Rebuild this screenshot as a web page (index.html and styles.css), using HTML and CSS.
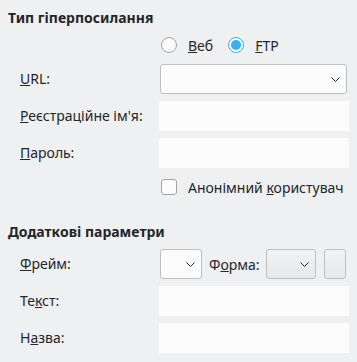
FILE: index.html
```html
<!DOCTYPE html>
<html lang="uk">
<head>
  <meta charset="UTF-8">
  <title>Гіперпосилання</title>
  <link rel="stylesheet" href="styles.css">
</head>
<body>
  <div class="section">
    <h3>Тип гіперпосилання</h3>
    <div class="form">
      <div></div>
      <div class="radios">
        <label class="radio">
          <svg width="16" height="16" viewBox="0 0 16 16"><circle cx="8" cy="8" r="7.5" fill="#fcfcfc" stroke="#a1a3a5"/></svg>
          <span><u>В</u>еб</span>
        </label>
        <label class="radio">
          <svg width="16" height="16" viewBox="0 0 16 16"><circle cx="8" cy="8" r="7.5" fill="#fcfcfc" stroke="#3daee9"/><circle cx="8" cy="8" r="5" fill="#3daee9"/></svg>
          <span><u>F</u>TP</span>
        </label>
      </div>

      <div class="label"><u>U</u>RL:</div>
      <div class="combo edit">
        <svg class="chev" width="9" height="5" viewBox="0 0 9 5"><path d="M0.5 0.5 L4.5 4.5 L8.5 0.5" fill="none" stroke="#232629" stroke-width="1"/></svg>
      </div>

      <div class="label"><u>Р</u>еєстраційне ім'я:</div>
      <div class="field"></div>

      <div class="label"><u>П</u>ароль:</div>
      <div class="field"></div>

      <div></div>
      <label class="check">
        <span class="box"></span>
        <span>Анонімний <u>к</u>ористувач</span>
      </label>
    </div>
  </div>

  <div class="section extra">
    <h3>Додаткові параметри</h3>
    <div class="form">
      <div class="label"><u>Ф</u>рейм:</div>
      <div class="frame-row">
        <div class="combo edit small">
          <svg class="chev" width="9" height="5" viewBox="0 0 9 5"><path d="M0.5 0.5 L4.5 4.5 L8.5 0.5" fill="none" stroke="#232629" stroke-width="1"/></svg>
        </div>
        <span class="inline-label">Ф<u>о</u>рма:</span>
        <div class="combo button-like medium">
          <svg class="chev" width="9" height="5" viewBox="0 0 9 5"><path d="M0.5 0.5 L4.5 4.5 L8.5 0.5" fill="none" stroke="#232629" stroke-width="1"/></svg>
        </div>
        <div class="btn"></div>
      </div>

      <div class="label">Те<u>к</u>ст:</div>
      <div class="field"></div>

      <div class="label">Н<u>а</u>зва:</div>
      <div class="field"></div>
    </div>
  </div>
</body>
</html>
```

FILE: styles.css
```css
body {
  margin: 0;
  padding: 8px 8px 0 8px;
  background-color: #eff0f1;
  color: #232629;
  font-family: "Noto Sans", sans-serif;
  font-size: 14px;
}
h3 {
  margin: 0 0 5px 0;
  font-size: 14px;
  font-weight: bold;
  line-height: 20px;
}
.extra {
  margin-top: 23px;
}
.extra h3 {
  margin-bottom: 7px;
}
.form {
  display: grid;
  grid-template-columns: 139px 1fr;
  row-gap: 7px;
  padding-left: 12px;
  align-items: center;
}
.label {
  line-height: 20px;
}
.radios {
  display: flex;
  align-items: center;
  height: 24px;
  padding-left: 2px;
}
.radio {
  display: flex;
  align-items: center;
}
.radio + .radio {
  margin-left: 15px;
}
.radio svg {
  margin-right: 11px;
}
.combo {
  position: relative;
  height: 28px;
  border: 1px solid #bdbfc1;
  border-radius: 3px;
  box-sizing: content-box;
}
.combo.edit {
  background-color: #fcfcfc;
  margin: 0 2px 0 1px;
}
.combo .chev {
  position: absolute;
  right: 6px;
  top: 12px;
}
.field {
  height: 30px;
  background-color: #fcfcfc;
}
.check {
  display: flex;
  align-items: center;
  height: 24px;
  padding-left: 2px;
}
.box {
  width: 14px;
  height: 14px;
  border: 1px solid #a1a3a5;
  border-radius: 3px;
  background-color: #fcfcfc;
  margin-right: 11px;
}
.frame-row {
  display: flex;
  align-items: center;
}
.combo.small {
  width: 40px;
  margin: 0;
  margin-left: 1px;
}
.inline-label {
  margin-left: 7px;
  margin-right: 6px;
}
.combo.button-like {
  background: linear-gradient(#f1f2f3, #e6e8e9);
}
.combo.medium {
  width: 48px;
}
.btn {
  width: 20px;
  height: 28px;
  margin-left: 8px;
  border: 1px solid #bdbfc1;
  border-radius: 3px;
  background: linear-gradient(#f1f2f3, #e6e8e9);
}
```
